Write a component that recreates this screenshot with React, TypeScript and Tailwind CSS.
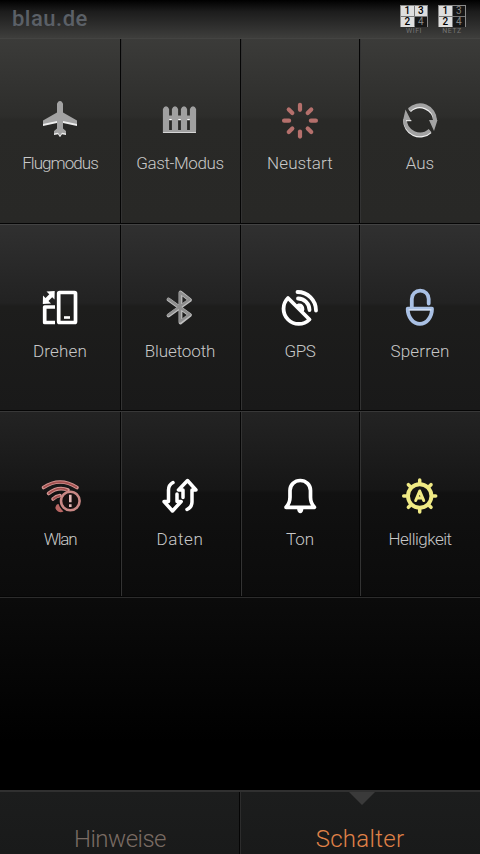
import type { ReactNode } from 'react'

interface Toggle { label: string; tracking: string; icon: ReactNode }

const Svg = ({ children }: { children: ReactNode }) => (
  <svg viewBox="0 0 40 40" width="40" height="40" fill="none" strokeLinecap="round" strokeLinejoin="round" className="shrink-0 overflow-visible">
    {children}
  </svg>
)

const PlaneIcon = () => (
  <Svg>
    <path d="M20 2c1.800 0 3 2 3 4v7.500l14 8v4.500l-14-3v6.500l3 2.500v3l-4-.8-2 3-2-3-4 .8v-3l3-2.500V23l-14 3v-4.500l14-8V6c0-2 1.200-4 3-4z" fill="#eee" />
    <path d="M20 1c1.800 0 3 2 3 4v7.500l14 8v3.500l-14-3v7.500l3 2.500v2.500l-4-.8-2 3-2-3-4 .8v-2.500l3-2.500V21l-14 3v-3.500l14-8V5c0-2 1.200-4 3-4z" fill="#a3a3a3" />
  </Svg>
)

const FenceIcon = () => (
  <Svg>
    <path d="M3 15.500h33v4H3zM3 30h33v3H3z" fill="#a0a0a0" />
    {[6, 15, 24, 33].map(x => (
      <path key={x} d={`M${x - 3.1} 33V9q1-2.800 3.100-2.800T${x + 3.1} 9v21l-1 3z`} fill="#a0a0a0" />
    ))}
    <path d="M9.200 19.600h2.600M18.200 19.600h2.600M27.200 19.600h2.600" stroke="#fff" strokeWidth="1.300" strokeLinecap="butt" />
    <path d="M3 32.500h33" stroke="#d5d5d5" strokeLinecap="butt" />
  </Svg>
)

const SpinnerIcon = () => (
  <Svg>
    {[0, 45, 90, 135, 180, 225, 270, 315].map(a => (
      <path key={a} d="M20 4.800v5" stroke="#b5706c" strokeWidth="4.200" transform={`rotate(${a} 20 20.700)`} />
    ))}
  </Svg>
)

const ReloadIcon = () => (
  <Svg>
    <path d="M9.700 10.800A15 15 0 0 1 35 21M5 20A15 15 0 0 0 30.300 31.600" stroke="#f0f0f0" strokeWidth="3.600" strokeLinecap="butt" />
    <path d="M9.300 9.700A15 15 0 0 1 35 20M5 19A15 15 0 0 0 30 30.500" stroke="#a3a3a3" strokeWidth="3.800" strokeLinecap="butt" />
    <path d="M5.500 9.500 11 20.500H3zM29 20h8.500L34 31z" fill="#a3a3a3" />
    <path d="M6.500 20.700h4.500" stroke="#fff" />
  </Svg>
)

const RotateIcon = () => (
  <Svg>
    <rect x="18.700" y="4.500" width="16.800" height="30" rx="1" stroke="#fff" strokeWidth="3.700" />
    <path d="M24 28.200h6v2.600h-6z" fill="#fff" />
    <path d="M15 19H4.700v15.500H15" stroke="#fff" strokeWidth="3.700" strokeLinecap="butt" />
    <path d="M6 12.500l6-6" stroke="#fff" strokeWidth="4" strokeLinecap="butt" />
    <path d="M6.500 3.500 14.700 3 14.500 11.500zM3 7.500 2.800 16 11 15.500z" fill="#fff" />
  </Svg>
)

const BluetoothIcon = () => (
  <Svg>
    <path d="M8.500 11.500 30 27 20.500 34.500V4.500L30 12 8.500 27.500" stroke="#c0c0c0" strokeWidth="3.800" />
    <path d="M8.300 11 29.600 26.500 20 33.500V4.500L29.600 11.500 8.300 27" stroke="#8e8e8e" strokeWidth="2.400" />
  </Svg>
)

const GpsIcon = () => (
  <Svg>
    <g stroke="#fff" strokeWidth="3.800">
      <path d="M8 10 29.500 31.500A15.200 15.200 0 0 1 8 10z" />
      <path d="M17.500 4A18.500 18.500 0 0 1 36 22.500M18 10.500A11.500 11.500 0 0 1 29.500 22" />
      <path d="M18.500 17.500q4-.5 4 4" />
    </g>
  </Svg>
)

const LockIcon = () => (
  <Svg>
    <path d="M11.800 20V11a8.400 8.400 0 0 1 16.900 0v4.500M7.700 20.700h24.300a12.150 15.200 0 0 1-24.300 0z" stroke="#a9c0e4" strokeWidth="3.800" />
    <path d="M9 21.900h22" stroke="#e6effc" strokeWidth="1" />
  </Svg>
)

const WlanIcon = () => (
  <Svg>
    <g stroke="#d49794" strokeWidth="3.600">
      <path d="M3.500 11.500Q20 .5 37 11.500M8.500 17.500Q18 10 28 14M13 23q3-3 7-3.500" />
    </g>
    <g stroke="#a3504f" strokeWidth="1.800">
      <path d="M4 11.300Q20 .8 36.500 11.300M9 17.200Q18 10.200 27 14M13.500 22.800q3-2.600 6-3" />
    </g>
    <path d="M15.500 31q1-3.500 3-3 1.500 4.500 5 7.500-3 1.500-5.500 0-3-2-2.500-4.500z" fill="#b86663" />
    <circle cx="30.300" cy="25" r="9.300" fill="#181010" stroke="#c98885" strokeWidth="2.600" />
    <path d="M30.300 18.800v7.500M30.300 28.300v2.700" stroke="#e3bab8" strokeWidth="2.600" strokeLinecap="butt" />
  </Svg>
)

const DataIcon = () => (
  <Svg>
    <g stroke="#fff" strokeWidth="3.500">
      <path d="M13 6.500Q8.500 9 8.500 14v11.500h-4.500l8.500 9.500 8.700-9.500H17V18" />
      <path d="M27 33.500q5-2.500 5-7.500V14h4L27.500 4.500 18.500 14H23v7.500" />
    </g>
  </Svg>
)

const BellIcon = () => (
  <Svg>
    <path d="M6 31.300q4-4 4-10V14.500a10.250 10 0 0 1 20.500 0v6.800q0 6 4 10z" stroke="#fff" strokeWidth="3.700" />
    <path d="M17 32.500h6.500q-.5 4.700-3.200 4.700T17 32.500z" fill="#fff" />
  </Svg>
)

const BrightnessIcon = () => (
  <Svg>
    <circle cx="19.700" cy="20" r="11.700" stroke="#f0ea85" strokeWidth="3.900" />
    {[0, 45, 90, 135, 180, 225, 270, 315].map(a => (
      <path key={a} d="M19.700 7V4" stroke="#f0ea85" strokeWidth="3.500" transform={`rotate(${a} 19.700 20)`} />
    ))}
    <path d="M15.700 24.500 19.700 15l4 9.500M17.500 22h4.400" stroke="#f0ea85" strokeWidth="3" />
  </Svg>
)

// every row has its own glossy gradient, darker towards the bottom of the screen
const ROWS: { row: string; cell: string; items: Toggle[] }[] = [
  {
    row: 'h-[185px] bg-linear-[to_bottom,#3b3b39,#2d2d2b_42%,#292927_44%,#282826]',
    cell: 'pt-[61px]',
    items: [
      { label: 'Flugmodus', tracking: 'tracking-[-0.950px]', icon: <PlaneIcon /> },
      { label: 'Gast-Modus', tracking: 'tracking-[-0.400px]', icon: <FenceIcon /> },
      { label: 'Neustart', tracking: 'tracking-[0.100px]', icon: <SpinnerIcon /> },
      { label: 'Aus', tracking: 'tracking-[0px]', icon: <ReloadIcon /> },
    ],
  },
  {
    row: 'h-[187px] border-t border-t-[#434343] bg-linear-[to_bottom,#303030,#222222_42%,#1d1d1c_44%,#191919]',
    cell: 'pt-[63px]',
    items: [
      { label: 'Drehen', tracking: 'tracking-[0.200px]', icon: <RotateIcon /> },
      { label: 'Bluetooth', tracking: 'tracking-[-0.100px]', icon: <BluetoothIcon /> },
      { label: 'GPS', tracking: 'tracking-[-0.400px]', icon: <GpsIcon /> },
      { label: 'Sperren', tracking: 'tracking-[0.200px]', icon: <LockIcon /> },
    ],
  },
  {
    row: 'h-[186px] border-t border-t-[#383838] bg-linear-[to_bottom,#232323,#161616_42%,#111111_44%,#0b0b0b]',
    cell: 'pt-[64px]',
    items: [
      { label: 'Wlan', tracking: 'tracking-[-1.200px]', icon: <WlanIcon /> },
      { label: 'Daten', tracking: 'tracking-[0.600px]', icon: <DataIcon /> },
      { label: 'Ton', tracking: 'tracking-[0px]', icon: <BellIcon /> },
      { label: 'Helligkeit', tracking: 'tracking-[-0.500px]', icon: <BrightnessIcon /> },
    ],
  },
]

const DIVIDERS = [
  '',
  'shadow-[inset_1px_0_#050505,inset_2px_0_#333333]',
  'shadow-[inset_1px_0_#050505,inset_2px_0_#333333]',
  'shadow-[-1px_0_#050505,inset_1px_0_#333333]',
]

const SimStatus = ({ name, active }: { name: string; active: number[] }) => (
  <div className="flex w-7 flex-col items-center">
    <div className="grid h-[22px] w-7 grid-cols-2 gap-px border border-[#8a8a8a] bg-[#777]">
      {[1, 3, 2, 4].map(n => (
        <span
          key={n}
          className={`flex items-center justify-center text-[10px] leading-none ${active.includes(n) ? 'bg-[#dedede] font-medium text-black' : 'bg-[#161616] text-[#858585]'}`}
        >
          {n}
        </span>
      ))}
    </div>
    <span className="mt-px text-[7px] leading-[6px] tracking-[0.500px] text-[#757575]">{name}</span>
  </div>
)

export default function App() {
  return (
    <div className="flex h-[854px] w-[480px] flex-col overflow-hidden bg-black font-['Roboto','Liberation_Sans',sans-serif]">
      <header className="flex h-[39px] shrink-0 justify-between border-b border-[#444442] bg-linear-[to_bottom,#000,#1c1c1c_30%,#3e3e3c] pr-[14px] pl-3">
        <span className="mt-[4px] text-[22px] leading-[30px] font-medium tracking-[0.500px] text-[#5b6067]">blau.de</span>
        <div className="flex gap-[10px] pt-[5px]">
          <SimStatus name="WIFI" active={[1, 2, 3]} />
          <SimStatus name="NETZ" active={[1, 2]} />
        </div>
      </header>

      <main className="flex flex-1 flex-col">
        {ROWS.map((r, i) => (
          <div key={i} className={`grid shrink-0 grid-cols-4 border-b border-b-[#050505] ${r.row}`}>
            {r.items.map((t, j) => (
              <div key={t.label} className={`flex flex-col items-center ${r.cell} ${DIVIDERS[j]}`}>
                {t.icon}
                <span className={`mt-[11px] text-[17px] leading-6 font-light text-[#c8c8c8] ${t.tracking}`}>{t.label}</span>
              </div>
            ))}
          </div>
        ))}
        <div className="flex-1 border-t border-[#2c2c2c] bg-linear-[to_bottom,#0b0b0b,#000_75%]" />
      </main>

      <footer className="relative grid h-[64px] shrink-0 grid-cols-2 border-t-2 border-[#303030] bg-linear-[to_bottom,#1c1d1d,#191a1a] text-center text-[24px] leading-7 font-light">
        <div className="pt-[33px] tracking-[-0.500px] text-[#7a6c64]">Hinweise</div>
        <div className="pt-[33px] tracking-[0.300px] text-[#e08248] shadow-[inset_1px_0_#2c2c2c,-1px_0_#050505]">Schalter</div>
        <svg className="absolute top-0 left-[349px]" width="26" height="14" viewBox="0 0 26 14">
          <path d="M0 0h26L13 13z" fill="#3a3a3a" />
        </svg>
      </footer>
    </div>
  )
}
